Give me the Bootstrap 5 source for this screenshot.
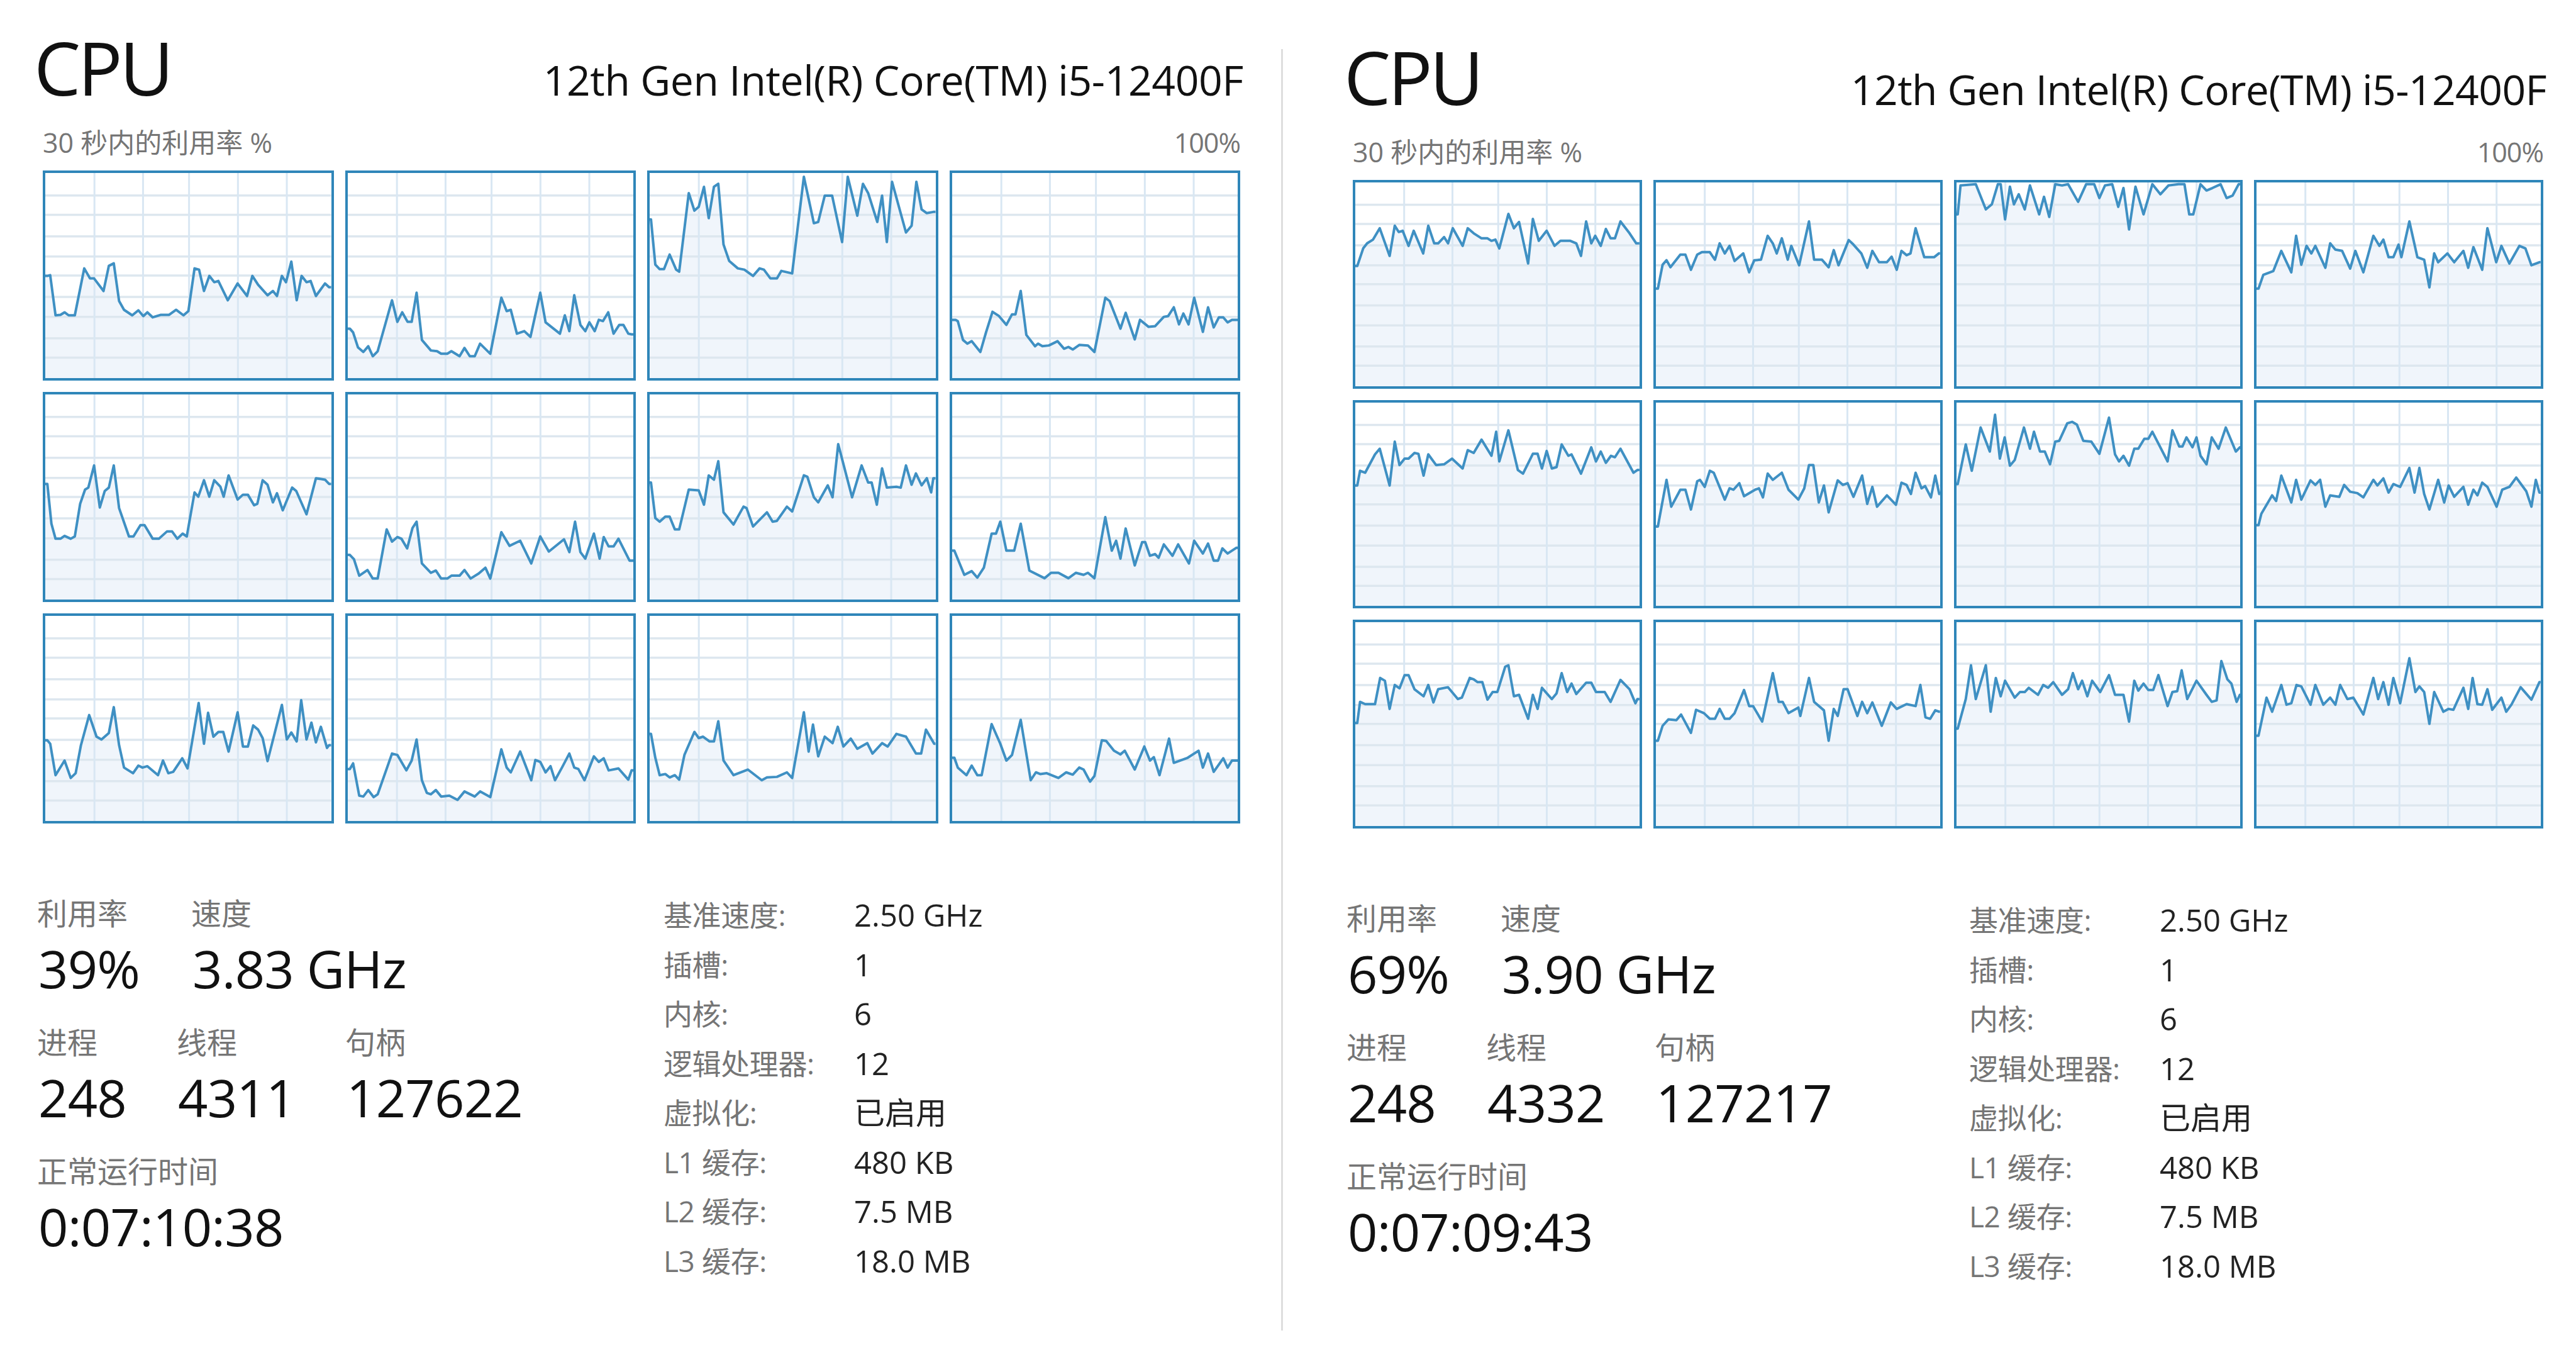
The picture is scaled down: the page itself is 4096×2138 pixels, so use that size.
<!DOCTYPE html>
<html lang="zh-CN">

<head>
  <meta charset="UTF-8">
  <meta name="viewport" content="width=device-width, initial-scale=1.0">
  <title>CPU</title>
  <link href="https://cdn.jsdelivr.net/npm/bootstrap@5.3.0/dist/css/bootstrap.min.css" rel="stylesheet">
  <style>
    body {
      background: #fff;
      color: #111;
      font-family: "Open Sans", "Noto Sans CJK SC", sans-serif;
      width: 4096px;
      height: 2138px;
      overflow: hidden;
    }

    .cpu-panel {
      --pad-top: 48px;
      --pad-left: 68px;
      --graphs-w: 1904px;
      --graphs-h: 1038px;
      --stats-top: 119px;
      padding: var(--pad-top) 0 0 var(--pad-left);
    }

    .cpu-panel-a { width: 2037px; }
    .cpu-panel-b {
      --pad-top: 63px;
      --pad-left: 111px;
      --graphs-w: 1893px;
      --graphs-h: 1031px;
      --stats-top: 119px;
      flex: 1;
    }

    .cpu-divider {
      width: 3px;
      height: 2037px;
      margin-top: 78px;
      background: #dedede;
    }

    .cpu-head { width: var(--graphs-w); height: 149px; }
    .cpu-title { font-size: 118px; line-height: 118px; letter-spacing: -4.5px; margin: 0 0 0 -14px; font-weight: 400; }
    .cpu-model { font-size: 66px; line-height: 118px; letter-spacing: -.4px; margin-right: -5px; }
    .cpu-panel-b .cpu-model { letter-spacing: -.6px; }

    .cpu-axis { width: var(--graphs-w); height: 74px; color: #757575; font-size: 43px; line-height: 60px; }
    .cpu-axis span:last-child { letter-spacing: -1px; }

    .cpu-graphs {
      display: grid;
      grid-template-columns: repeat(4, 1fr);
      grid-template-rows: repeat(3, 1fr);
      gap: 18px;
      width: var(--graphs-w);
      height: var(--graphs-h);
    }

    .cpu-cell { border: 4px solid #2f86b9; background: #fff; overflow: hidden; }
    .cpu-cell svg { display: block; width: 100%; height: 100%; }

    .cpu-stats { margin-top: var(--stats-top); }
    .cpu-live { width: 998px; margin-left: -9px; }
    .cpu-panel-b .cpu-live { width: 992px; margin-left: -10px; }
    .cpu-live-row { margin-bottom: 39px; }
    .stat-util { width: 245px; }
    .stat-proc { width: 222px; }
    .stat-thread { width: 268px; }

    .stat-label { color: #757575; font-size: 48px; line-height: 48px; height: 56px; }
    .stat-value { font-size: 83px; line-height: 110px; height: 110px; letter-spacing: -.8px; margin-left: 2px; white-space: nowrap; }

    .cpu-specs { display: grid; grid-template-columns: 303px auto; grid-auto-rows: 78.5px; align-items: center; margin: -13px 0 0 -2px; }
    .cpu-specs dt { color: #757575; font-size: 46px; font-weight: 400; line-height: 50px; white-space: pre; letter-spacing: -.4px; }
    .cpu-specs dd { margin: 0; font-size: 49px; line-height: 50px; letter-spacing: 0; color: #222; }
  </style>
</head>

<body>
  <div class="d-flex">
    <section class="cpu-panel cpu-panel-a" id="panelA">
      <div class="cpu-head d-flex justify-content-between align-items-baseline">
        <h1 class="cpu-title">CPU</h1>
        <span class="cpu-model">12th Gen Intel(R) Core(TM) i5-12400F</span>
      </div>
      <div class="cpu-axis d-flex justify-content-between">
        <span>30 秒内的利用率 %</span>
        <span>100%</span>
      </div>
      <div class="cpu-graphs"></div>
      <div class="cpu-stats d-flex">
        <div class="cpu-live">
          <div class="cpu-live-row d-flex">
            <div class="stat-util"><div class="stat-label">利用率</div><div class="stat-value">39%</div></div>
            <div><div class="stat-label">速度</div><div class="stat-value">3.83 GHz</div></div>
          </div>
          <div class="cpu-live-row d-flex">
            <div class="stat-proc"><div class="stat-label">进程</div><div class="stat-value">248</div></div>
            <div class="stat-thread"><div class="stat-label">线程</div><div class="stat-value">4311</div></div>
            <div><div class="stat-label">句柄</div><div class="stat-value">127622</div></div>
          </div>
          <div><div class="stat-label">正常运行时间</div><div class="stat-value">0:07:10:38</div></div>
        </div>
        <dl class="cpu-specs">
          <dt>基准速度:</dt><dd>2.50 GHz</dd>
          <dt>插槽:</dt><dd>1</dd>
          <dt>内核:</dt><dd>6</dd>
          <dt>逻辑处理器:</dt><dd>12</dd>
          <dt>虚拟化:</dt><dd>已启用</dd>
          <dt>L1 缓存:</dt><dd>480 KB</dd>
          <dt>L2 缓存:</dt><dd>7.5 MB</dd>
          <dt>L3 缓存:</dt><dd>18.0 MB</dd>
        </dl>
      </div>
    </section>

    <div class="cpu-divider"></div>

    <section class="cpu-panel cpu-panel-b" id="panelB">
      <div class="cpu-head d-flex justify-content-between align-items-baseline">
        <h1 class="cpu-title">CPU</h1>
        <span class="cpu-model">12th Gen Intel(R) Core(TM) i5-12400F</span>
      </div>
      <div class="cpu-axis d-flex justify-content-between">
        <span>30 秒内的利用率 %</span>
        <span>100%</span>
      </div>
      <div class="cpu-graphs"></div>
      <div class="cpu-stats d-flex">
        <div class="cpu-live">
          <div class="cpu-live-row d-flex">
            <div class="stat-util"><div class="stat-label">利用率</div><div class="stat-value">69%</div></div>
            <div><div class="stat-label">速度</div><div class="stat-value">3.90 GHz</div></div>
          </div>
          <div class="cpu-live-row d-flex">
            <div class="stat-proc"><div class="stat-label">进程</div><div class="stat-value">248</div></div>
            <div class="stat-thread"><div class="stat-label">线程</div><div class="stat-value">4332</div></div>
            <div><div class="stat-label">句柄</div><div class="stat-value">127217</div></div>
          </div>
          <div><div class="stat-label">正常运行时间</div><div class="stat-value">0:07:09:43</div></div>
        </div>
        <dl class="cpu-specs">
          <dt>基准速度:</dt><dd>2.50 GHz</dd>
          <dt>插槽:</dt><dd>1</dd>
          <dt>内核:</dt><dd>6</dd>
          <dt>逻辑处理器:</dt><dd>12</dd>
          <dt>虚拟化:</dt><dd>已启用</dd>
          <dt>L1 缓存:</dt><dd>480 KB</dd>
          <dt>L2 缓存:</dt><dd>7.5 MB</dd>
          <dt>L3 缓存:</dt><dd>18.0 MB</dd>
        </dl>
      </div>
    </section>
  </div>

  <script src="https://cdn.jsdelivr.net/npm/bootstrap@5.3.0/dist/js/bootstrap.bundle.min.js"></script>
  <script>
    // traces read off the reference: each one is measured inside the box [x0, y0, x1, y1]
    const colsA = [[103, 800], [827, 1525], [42, 700], [727, 1386]];
    const rowsA = [[665, 1482], [50, 772], [815, 1545]];
    const colsB = [[80, 800], [828, 1550], [42, 750], [778, 1488]];
    const rowsB = [[703, 1512], [77, 797], [837, 1560]];

    const tracesA = [
      "108,1075 115,1072 128,1232 140,1230 150,1220 160,1232 175,1232 198,1045 212,1085 222,1085 245,1135 258,1035 270,1025 283,1175 295,1210 315,1232 330,1212 342,1235 352,1220 365,1240 385,1230 405,1230 422,1210 440,1232 452,1215 467,1045 478,1050 490,1135 503,1075 515,1100 525,1095 548,1172 572,1105 595,1155 608,1075 622,1110 645,1152 658,1135 668,1155 680,1075 690,1100 703,1018 716,1172 728,1075 740,1100 750,1095 763,1155 785,1105 795,1120",
      "832,1285 840,1300 852,1360 865,1378 877,1355 888,1395 900,1375 935,1172 948,1258 960,1220 973,1258 983,1258 995,1142 1008,1330 1030,1372 1045,1375 1055,1385 1070,1385 1080,1375 1100,1395 1112,1362 1125,1395 1137,1395 1150,1345 1175,1385 1202,1162 1215,1215 1225,1210 1240,1305 1258,1295 1273,1318 1297,1142 1310,1260 1345,1305 1357,1232 1368,1295 1380,1152 1395,1270 1407,1295 1417,1260 1430,1295 1440,1250 1450,1255 1463,1220 1476,1305 1490,1270 1500,1270 1512,1305 1520,1308",
      "45,850 55,1030 65,1048 75,1048 88,990 103,1050 110,1058 132,745 145,815 155,800 167,720 178,845 190,720 200,708 212,950 225,1015 245,1045 260,1050 280,1075 295,1045 305,1050 320,1085 335,1085 345,1055 370,1065 397,680 420,865 430,860 445,755 462,755 485,940 498,680 520,835 533,708 545,745 566,860 577,755 588,940 600,700 632,902 645,875 656,700 668,810 680,825 695,820",
      "735,1250 740,1255 752,1330 762,1345 772,1335 792,1378 805,1300 820,1218 835,1235 852,1270 865,1228 873,1228 885,1135 898,1310 918,1355 925,1345 935,1355 950,1352 970,1335 985,1365 995,1358 1005,1368 1020,1350 1040,1352 1055,1378 1080,1162 1090,1175 1115,1285 1127,1222 1148,1328 1160,1250 1180,1278 1195,1275 1215,1238 1225,1235 1238,1200 1250,1268 1260,1225 1272,1268 1285,1162 1305,1298 1317,1200 1330,1280 1342,1240 1352,1240 1362,1260 1372,1250 1382,1250",
      "108,365 118,505 128,558 140,558 150,548 165,558 175,550 188,435 200,385 208,378 222,300 236,448 248,390 258,378 270,300 283,450 307,550 318,550 335,510 345,510 365,558 380,558 400,532 412,532 425,558 438,540 448,550 467,395 476,410 490,352 503,410 515,352 530,375 538,410 550,335 572,420 585,403 597,403 612,440 620,435 633,352 645,368 658,430 668,398 682,458 705,378 715,390 740,472 763,345 785,350 795,365",
      "832,615 842,630 855,688 875,668 888,698 900,698 922,525 935,568 948,552 958,558 972,592 985,520 995,498 1008,645 1030,678 1042,670 1055,698 1070,698 1080,688 1100,688 1112,668 1127,698 1147,680 1163,660 1175,698 1202,535 1222,583 1248,565 1275,645 1297,550 1318,603 1355,560 1368,605 1382,498 1395,605 1407,628 1428,540 1442,628 1452,552 1464,585 1476,585 1488,558 1515,635",
      "45,360 55,485 65,498 78,480 88,480 100,525 110,525 132,385 155,388 167,438 178,335 190,350 200,285 212,465 235,508 258,445 265,450 280,515 312,465 325,498 335,495 358,445 370,462 397,335 405,340 420,412 430,430 452,370 463,412 476,225 508,412 530,300 545,360 553,360 565,438 577,310 588,378 610,375 620,378 632,300 645,368 655,328 668,370 680,345 690,395 695,345",
      "732,600 755,685 772,672 785,695 800,660 818,540 828,540 838,498 852,600 870,600 885,505 905,670 940,697 955,678 972,678 995,697 1012,678 1030,685 1040,678 1055,697 1080,482 1095,600 1105,565 1115,628 1127,522 1148,652 1165,570 1172,570 1183,618 1195,612 1203,625 1215,578 1235,618 1248,578 1273,645 1285,565 1305,610 1317,575 1330,635 1340,635 1350,592 1362,610 1382,590",
      "108,1258 115,1270 128,1382 150,1330 165,1392 177,1375 190,1275 210,1168 228,1245 240,1255 258,1232 270,1140 283,1275 295,1355 317,1375 330,1348 340,1355 352,1350 378,1382 390,1330 403,1375 415,1370 437,1322 450,1358 477,1125 490,1270 500,1160 513,1245 525,1228 537,1228 550,1298 572,1158 585,1280 597,1280 610,1205 622,1220 633,1250 645,1332 680,1132 692,1255 703,1230 716,1262 727,1115 740,1255 752,1195 763,1265 775,1210 790,1285 795,1275",
      "832,1360 840,1340 855,1455 865,1458 877,1435 890,1460 900,1450 935,1305 948,1310 970,1365 983,1330 995,1255 1008,1400 1020,1445 1030,1450 1042,1435 1055,1458 1075,1455 1095,1470 1112,1440 1137,1458 1150,1440 1175,1460 1202,1290 1215,1355 1225,1372 1248,1298 1275,1400 1285,1328 1297,1335 1310,1372 1322,1350 1333,1400 1350,1355 1368,1305 1380,1355 1390,1360 1405,1400 1428,1315 1440,1335 1452,1322 1464,1365 1488,1358 1512,1398 1520,1365",
      "45,1235 55,1320 65,1382 78,1378 88,1390 100,1382 110,1398 122,1310 145,1228 155,1250 165,1245 180,1262 190,1262 200,1190 212,1330 235,1382 268,1362 300,1400 312,1390 335,1388 358,1372 370,1392 397,1158 408,1298 418,1202 430,1315 445,1245 463,1268 475,1210 488,1280 505,1252 520,1288 543,1268 555,1305 577,1268 590,1280 610,1235 632,1245 655,1305 667,1305 678,1220 697,1270",
      "732,1320 740,1355 760,1382 772,1348 785,1382 795,1382 818,1200 838,1270 852,1330 865,1310 885,1185 908,1400 920,1372 930,1378 945,1375 972,1392 990,1372 1005,1380 1020,1355 1030,1362 1045,1405 1055,1385 1072,1258 1082,1260 1100,1295 1115,1308 1125,1295 1148,1362 1170,1280 1183,1330 1192,1318 1205,1382 1227,1252 1238,1338 1270,1320 1295,1295 1305,1355 1317,1305 1330,1370 1352,1322 1362,1355 1372,1330 1382,1330"
    ];

    const tracesB = [
      "85,1035 100,965 110,945 125,930 142,885 167,995 180,875 190,900 200,895 215,955 228,895 252,985 265,875 280,945 290,945 305,920 315,945 327,885 352,955 365,885 380,905 400,925 415,925 425,935 435,930 445,965 468,828 482,885 495,860 518,1025 530,848 545,935 565,895 585,955 600,935 625,935 640,945 652,995 665,858 678,945 688,915 702,955 715,888 727,925 738,925 752,858 775,905 792,945",
      "833,1125 845,1030 855,1012 865,1040 890,990 903,990 917,1050 933,990 945,980 965,980 978,1010 990,945 1003,985 1015,955 1028,1015 1050,985 1065,1060 1078,1012 1095,1010 1112,915 1125,945 1135,985 1148,925 1163,1010 1172,955 1192,1032 1217,858 1230,1010 1250,1010 1267,1040 1280,972 1292,1032 1318,932 1330,950 1350,985 1365,1042 1378,975 1395,1020 1415,1020 1427,998 1440,1050 1452,975 1465,992 1475,985 1488,885 1510,1000 1535,1000 1547,985",
      "45,830 52,715 90,710 115,810 130,790 145,710 152,710 163,850 175,720 185,790 197,750 212,810 225,715 248,830 260,760 273,840 288,710 305,715 320,710 345,780 365,710 385,710 398,765 412,715 430,710 445,800 458,725 472,890 488,720 508,830 530,710 550,750 570,715 595,710 610,710 622,830 632,830 650,710 665,735 680,725 700,710 715,765 730,755 745,710",
      "783,1125 795,1070 820,1055 840,975 865,1060 877,915 890,1030 903,955 915,985 925,955 950,1042 962,945 975,970 992,975 1012,1045 1025,975 1045,1060 1070,915 1085,955 1095,930 1108,1000 1120,1000 1133,950 1140,1000 1160,858 1180,1000 1197,1010 1210,1120 1222,985 1232,1020 1255,985 1272,1020 1295,975 1307,1042 1320,960 1342,1050 1355,885 1377,1020 1390,955 1410,1025 1435,955 1450,965 1465,1032 1485,1020",
      "85,370 92,318 105,325 130,260 142,240 167,370 180,215 192,298 205,275 215,275 230,255 240,258 253,335 265,260 285,298 305,295 325,275 352,310 365,245 380,255 400,208 425,265 437,180 445,285 468,175 492,315 505,328 530,258 542,258 553,310 565,248 578,310 590,305 603,225 620,265 628,260 652,328 678,235 690,285 702,250 715,290 728,265 738,270 752,240 785,325 795,315",
      "833,515 855,350 867,445 890,385 903,385 917,455 933,355 940,350 952,375 965,318 975,325 1003,420 1015,380 1025,385 1040,362 1052,408 1080,385 1090,380 1100,412 1112,328 1125,350 1148,325 1165,385 1190,420 1205,380 1217,298 1228,298 1242,430 1255,370 1267,465 1290,352 1303,368 1315,362 1330,410 1352,335 1365,435 1378,375 1390,445 1415,405 1438,438 1452,360 1465,368 1476,400 1488,325 1503,380 1512,372 1527,412 1538,335 1548,400",
      "45,365 65,225 80,318 102,165 125,250 138,120 150,275 162,200 175,300 187,280 210,165 225,240 235,180 250,250 262,250 275,295 288,215 298,212 318,150 330,145 342,155 358,212 378,215 398,258 422,130 437,260 447,285 458,265 472,300 485,240 495,240 510,205 520,205 530,180 568,285 580,175 597,232 605,232 615,200 630,235 640,200 650,265 665,295 678,200 695,240 713,165 738,250 748,235",
      "783,510 790,470 817,405 827,425 840,335 865,430 877,350 890,420 913,352 925,368 937,350 950,445 962,405 985,410 997,368 1012,392 1030,397 1045,412 1070,350 1080,370 1095,345 1108,395 1120,365 1137,375 1160,308 1173,395 1185,308 1197,400 1210,455 1232,350 1247,430 1258,370 1272,410 1295,375 1307,438 1320,385 1330,405 1342,360 1355,375 1378,445 1392,385 1410,375 1427,342 1452,390 1465,445 1476,350 1485,395",
      "85,1195 92,1120 105,1128 130,1128 143,1035 155,1045 167,1145 180,1060 192,1072 205,1025 215,1025 230,1075 253,1100 265,1060 278,1122 290,1075 315,1068 340,1110 350,1105 370,1035 380,1040 390,1050 402,1050 415,1112 428,1085 440,1085 460,995 468,990 482,1100 495,1095 518,1180 530,1095 542,1145 553,1070 578,1110 590,1090 603,1018 617,1085 628,1055 640,1092 665,1052 678,1052 690,1085 712,1085 727,1120 752,1042 775,1075 790,1125 795,1110",
      "833,1258 845,1205 860,1182 880,1185 892,1165 917,1230 930,1148 950,1160 965,1180 978,1180 990,1145 1003,1180 1015,1180 1028,1160 1052,1078 1065,1135 1075,1135 1098,1190 1125,1018 1140,1120 1150,1120 1165,1160 1190,1140 1195,1170 1217,1035 1230,1120 1255,1150 1267,1258 1280,1145 1290,1170 1305,1075 1315,1075 1340,1170 1352,1120 1365,1160 1378,1122 1402,1205 1425,1122 1440,1145 1465,1128 1488,1135 1500,1060 1513,1175 1525,1180 1538,1150 1548,1155",
      "45,1215 65,1110 78,990 90,1110 115,990 127,1155 140,1035 152,1100 163,1045 187,1105 200,1085 212,1085 222,1070 245,1095 258,1060 270,1070 283,1050 305,1095 320,1075 332,1018 345,1075 355,1045 368,1100 380,1045 400,1085 422,1025 437,1095 458,1095 472,1190 485,1045 495,1080 508,1055 520,1078 532,1078 545,1025 568,1135 580,1085 592,1082 603,1008 617,1110 640,1045 665,1095 678,1120 690,1115 702,975 717,1040 727,1055 740,1120 748,1095",
      "783,1240 803,1105 817,1155 840,1060 853,1130 865,1125 878,1060 890,1065 913,1130 925,1060 945,1130 962,1105 975,1130 987,1060 1005,1110 1020,1105 1045,1165 1070,1035 1082,1110 1095,1050 1108,1130 1120,1035 1137,1125 1160,965 1175,1085 1185,1065 1197,1085 1210,1198 1222,1085 1245,1155 1258,1145 1270,1148 1295,1070 1307,1145 1318,1035 1330,1128 1342,1130 1355,1075 1367,1148 1390,1105 1402,1155 1415,1130 1438,1068 1465,1112 1485,1050"
    ];

    const gridX = [0.172, 0.342, 0.503, 0.674, 0.845];
    const gridY = [0.11, 0.204, 0.309, 0.407, 0.5, 0.604, 0.702, 0.806, 0.9];

    function drawCell(trace, col, row) {
      const W = 1000;
      const H = 1000;
      const pts = trace.split(" ").map((p) => {
        const [x, y] = p.split(",").map(Number);
        return [(x - col[0]) / (col[1] - col[0]) * W, (y - row[0]) / (row[1] - row[0]) * H];
      });
      // run the trace out to both edges of the cell
      pts.unshift([0, pts[0][1]]);
      pts.push([W, pts[pts.length - 1][1]]);
      const line = pts.map((p) => p[0].toFixed(1) + "," + p[1].toFixed(1)).join(" ");
      let grid = "";
      gridY.forEach((g) => {
        grid += `<line x1="0" x2="${W}" y1="${g * H}" y2="${g * H}" stroke="#dde7ef" stroke-width="3.5" vector-effect="non-scaling-stroke"/>`;
      });
      gridX.forEach((g) => {
        grid += `<line y1="0" y2="${H}" x1="${g * W}" x2="${g * W}" stroke="#d9e7f3" stroke-width="3" vector-effect="non-scaling-stroke"/>`;
      });
      return `<div class="cpu-cell"><svg viewBox="0 0 ${W} ${H}" preserveAspectRatio="none">
        <polygon points="0,${H} ${line} ${W},${H}" fill="#f0f5fb"/>
        ${grid}
        <polyline points="${line}" fill="none" stroke="#3f90c3" stroke-width="4" stroke-linejoin="round" vector-effect="non-scaling-stroke"/>
      </svg></div>`;
    }

    function drawPanel(id, traces, cols, rows) {
      let html = "";
      traces.forEach((trace, i) => {
        html += drawCell(trace, cols[i % 4], rows[Math.floor(i / 4)]);
      });
      document.querySelector(`#${id} .cpu-graphs`).innerHTML = html;
    }

    drawPanel("panelA", tracesA, colsA, rowsA);
    drawPanel("panelB", tracesB, colsB, rowsB);
  </script>
</body>

</html>
